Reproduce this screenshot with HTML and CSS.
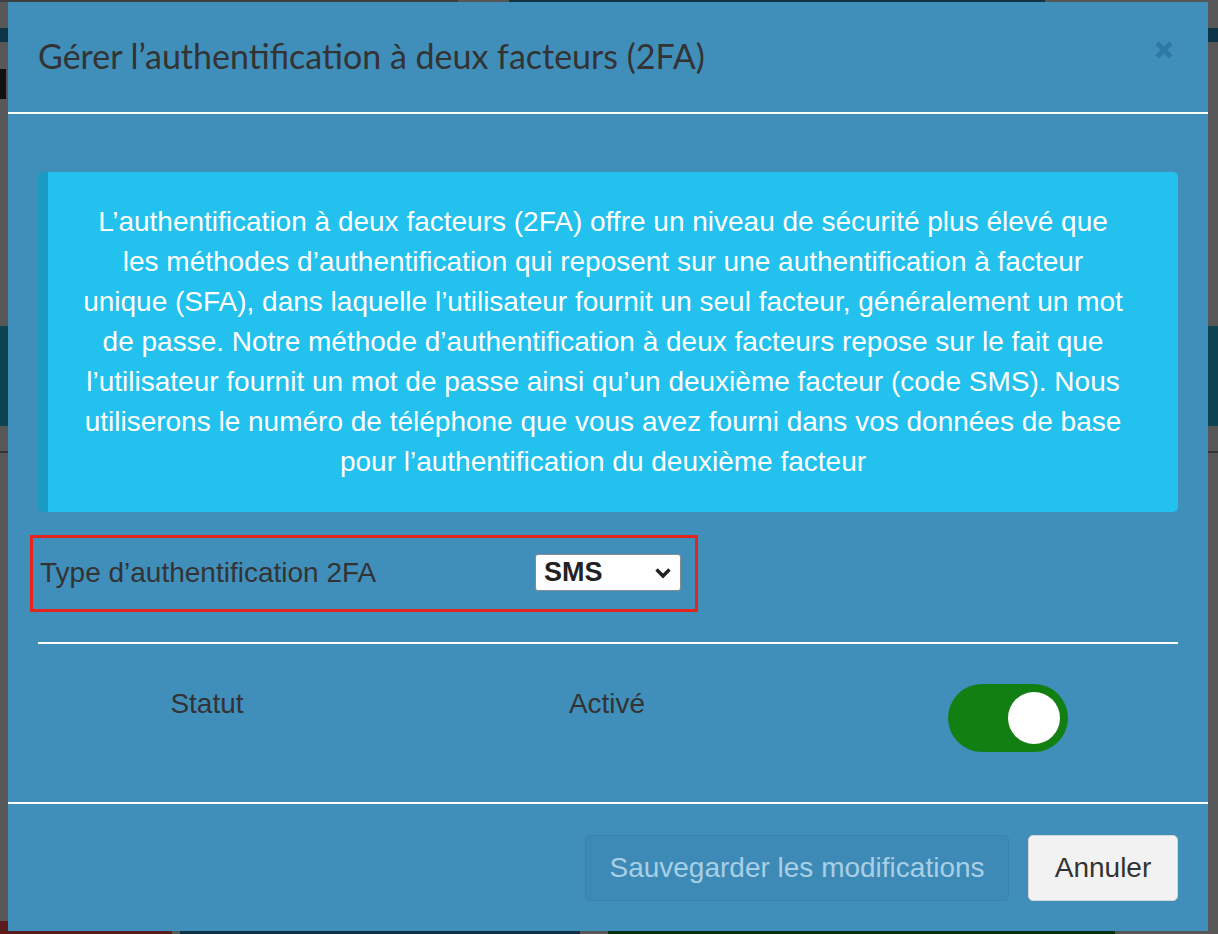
FILE: index.html
```html
<!DOCTYPE html>
<html lang="fr">
<head>
<meta charset="utf-8">
<title>Gérer l’authentification à deux facteurs (2FA)</title>
<link rel="stylesheet" href="styles.css">
</head>
<body>
<div class="backdrop">
  <div class="bp-top"><span class="bp-t1"></span><span class="bp-t2"></span><span class="bp-t3"></span></div>
  <div class="bp-nav"></div>
  <div class="bp-head"><span class="bp-glyph"></span></div>
  <div class="bp-gap"></div>
  <div class="bp-band"></div>
  <div class="bp-rule"></div>
  <div class="bp-fill"></div>
  <div class="bp-bottom">
    <span class="c1"></span><span class="c2"></span><span class="c3"></span><span class="c4"></span><span class="c5"></span>
  </div>
</div>

<div class="overlay">
  <div class="modal">
    <div class="modal-header">
      <h4 class="modal-title">Gérer l’authentification à deux facteurs (2FA)</h4>
      <button class="close" type="button" aria-label="Fermer">
        <svg width="20" height="20" viewBox="0 0 20 20"><path d="M3 3 L17 17 M17 3 L3 17" stroke="#2f7aa5" stroke-width="5" stroke-linecap="butt"/></svg>
      </button>
    </div>
    <div class="modal-body">
      <div class="info">
        L’authentification à deux facteurs (2FA) offre un niveau de sécurité plus élevé que<br>
        les méthodes d’authentification qui reposent sur une authentification à facteur<br>
        unique (SFA), dans laquelle l’utilisateur fournit un seul facteur, généralement un mot<br>
        de passe. Notre méthode d’authentification à deux facteurs repose sur le fait que<br>
        l’utilisateur fournit un mot de passe ainsi qu’un deuxième facteur (code SMS). Nous<br>
        utiliserons le numéro de téléphone que vous avez fourni dans vos données de base<br>
        pour l’authentification du deuxième facteur
      </div>
      <div class="type-row">
        <label class="type-label">Type d’authentification 2FA</label>
        <div class="select">
          <span>SMS</span>
          <svg width="18" height="12" viewBox="0 0 18 12"><path d="M2.5 2.5 L9 9 L15.5 2.5" fill="none" stroke="#222" stroke-width="3.4"/></svg>
        </div>
      </div>
      <div class="rule"></div>
      <div class="status-row">
        <div class="col-a">Statut</div>
        <div class="col-b">Activé</div>
        <div class="col-c"><div class="toggle"><span class="knob"></span></div></div>
      </div>
    </div>
    <div class="modal-footer">
      <button class="btn btn-save" type="button">Sauvegarder les modifications</button>
      <button class="btn btn-cancel" type="button">Annuler</button>
    </div>
  </div>
</div>
</body>
</html>
```
FILE: styles.css
```css
* { box-sizing: border-box; }
html, body { margin: 0; padding: 0; }
body {
  width: 1218px;
  height: 934px;
  overflow: hidden;
  background: #575757;
  font-family: "Liberation Sans", Arial, sans-serif;
}

/* dimmed page behind the dialog */
.backdrop { display: flex; flex-direction: column; height: 934px; }
.bp-top { height: 28px; display: flex; align-items: flex-start; }
.bp-top span { display: block; height: 2px; }
.bp-t1 { width: 458px; background: #3e3e3e; }
.bp-t2 { width: 51px; background: #575757; }
.bp-t3 { width: 536px; background: #0f3447; }
.bp-nav { height: 14px; background: #0f3447; }
.bp-head { height: 84px; display: flex; align-items: center; }
.bp-glyph { display: block; width: 6px; height: 30px; background: #111; }
.bp-gap { height: 200px; }
.bp-band { height: 100px; background: #0c4252; }
.bp-rule { height: 27px; border-bottom: 2px solid #333; }
.bp-fill { flex: 1; }
.bp-bottom { height: 13px; display: flex; }
.bp-bottom span { display: block; height: 100%; }
.c1 { width: 172px; background: #5a1c1c; }
.c2 { width: 8px; background: #575757; }
.c3 { width: 400px; background: #0f3246; }
.c4 { width: 28px; background: #575757; }
.c5 { width: 507px; background: #08300f; }

/* dialog */
.overlay {
  position: fixed;
  inset: 0;
  padding: 2px 10px 3px 8px;
}
.modal {
  width: 1200px;
  height: 929px;
  background: #408fbb;
  display: flex;
  flex-direction: column;
}
.modal-header {
  height: 112px;
  padding: 30px 30px 30px 30px;
  border-bottom: 2px solid #ffffff;
  display: flex;
  align-items: flex-start;
  justify-content: space-between;
}
.modal-title {
  margin: 0;
  font-family: "Lato", "Open Sans", sans-serif;
  font-weight: 400;
  font-size: 34px;
  line-height: 48px;
  color: #333333;
}
.close {
  border: 0;
  background: transparent;
  padding: 0;
  margin: 8px 4px 0 0;
  width: 20px;
  height: 20px;
  cursor: pointer;
}
.close svg { display: block; }

.modal-body {
  flex: 1;
  padding: 58px 30px 0 30px;
}
.info {
  background: #22c1ee;
  border-left: 10px solid #1a9cc2;
  border-radius: 5px;
  color: #ffffff;
  font-size: 28px;
  line-height: 40px;
  text-align: center;
  padding: 30px 20px 30px 0;
  white-space: nowrap;
}
.type-row {
  margin: 23px 0 0 -8px;
  width: 668px;
  height: 77px;
  border: 3px solid #e3261d;
  display: flex;
  align-items: center;
  padding: 0 14px 2px 7px;
}
.type-label {
  width: 495px;
  font-size: 28px;
  color: #333333;
}
.select {
  width: 146px;
  height: 37px;
  background: #ffffff;
  border: 1px solid #8a8a8a;
  border-radius: 3px;
  display: flex;
  align-items: center;
  justify-content: space-between;
  padding: 0 8px 0 8px;
  font-weight: 700;
  font-size: 27px;
  color: #222;
}
.select svg { display: block; }
.rule {
  margin-top: 30px;
  height: 2px;
  background: #ffffff;
}
.status-row {
  display: grid;
  grid-template-columns: 338px 462px 1fr;
  padding-top: 40px;
  font-size: 28px;
  line-height: 40px;
  color: #333333;
}
.col-a, .col-b { text-align: center; }
.col-c { display: flex; justify-content: center; }
.toggle {
  width: 120px;
  height: 68px;
  border-radius: 34px;
  background: #117f12;
  display: flex;
  align-items: center;
  justify-content: flex-end;
  padding-right: 8px;
}
.knob {
  width: 52px;
  height: 52px;
  border-radius: 50%;
  background: #ffffff;
}

.modal-footer {
  height: 129px;
  border-top: 2px solid #ffffff;
  padding: 31px 30px 0 30px;
  display: flex;
  justify-content: flex-end;
  align-items: flex-start;
  gap: 19px;
}
.btn {
  height: 66px;
  font-family: "Liberation Sans", Arial, sans-serif;
  font-size: 28px;
  border-radius: 5px;
  padding: 0;
  white-space: nowrap;
}
.btn-save {
  width: 424px;
  background: #3d8ab6;
  border: 1px solid #3883ad;
  color: #a9cfe5;
}
.btn-cancel {
  width: 150px;
  background: #f2f2f2;
  border: 1px solid #d6d6d6;
  color: #333333;
}
```
